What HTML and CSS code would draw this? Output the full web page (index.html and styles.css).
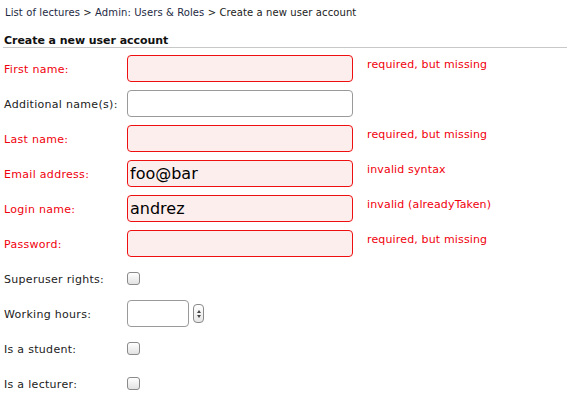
FILE: index.html
```html
<!DOCTYPE html>
<html>
<head>
<meta charset="utf-8">
<link rel="stylesheet" href="styles.css">
</head>
<body>
<div class="page">
  <div class="crumbs"><a>List of lectures</a> &gt; <a>Admin: Users &amp; Roles</a> &gt; <span>Create a new user account</span></div>
  <h2 class="title">Create a new user account</h2>
  <form class="form">
    <label class="lbl err">First name:</label>
    <input class="txt bad" type="text">
    <span class="msg">required, but missing</span>

    <label class="lbl">Additional name(s):</label>
    <input class="txt" type="text">
    <span class="msg"></span>

    <label class="lbl err">Last name:</label>
    <input class="txt bad" type="text">
    <span class="msg">required, but missing</span>

    <label class="lbl err">Email address:</label>
    <input class="txt bad" type="text" value="foo@bar">
    <span class="msg">invalid syntax</span>

    <label class="lbl err">Login name:</label>
    <input class="txt bad" type="text" value="andrez">
    <span class="msg">invalid (alreadyTaken)</span>

    <label class="lbl err">Password:</label>
    <input class="txt bad" type="password">
    <span class="msg">required, but missing</span>

    <label class="lbl">Superuser rights:</label>
    <span class="cell"><input class="chk" type="checkbox"></span>
    <span class="msg"></span>

    <label class="lbl">Working hours:</label>
    <span class="cell numcell"><input class="num" type="text"><span class="spin"><svg width="6" height="12" viewBox="0 0 6 12"><path d="M3 2 L5 5 L1 5 Z" fill="#444"/><path d="M3 10 L5 7 L1 7 Z" fill="#444"/></svg></span></span>
    <span class="msg"></span>

    <label class="lbl">Is a student:</label>
    <span class="cell"><input class="chk" type="checkbox"></span>
    <span class="msg"></span>

    <label class="lbl">Is a lecturer:</label>
    <span class="cell"><input class="chk" type="checkbox"></span>
    <span class="msg"></span>
  </form>
</div>
</body>
</html>
```
FILE: styles.css
```css
html, body {
  margin: 0;
  padding: 0;
  background: #fff;
}
body {
  font-family: "DejaVu Sans", Verdana, sans-serif;
  font-size: 11px;
  line-height: 13px;
  color: #222;
}
.page {
  margin: 0 7px 0 3px;
  padding-top: 6px;
}
.crumbs {
  padding-left: 2px;
  font-size: 10px;
  letter-spacing: 0.1px;
  color: #222;
}
.crumbs a {
  color: #1e2a44;
}
.title {
  margin: 15px 0 0 0;
  padding: 0 0 0 1px;
  font-size: 11px;
  line-height: 13px;
  font-weight: bold;
  letter-spacing: -0.05px;
  color: #111;
  border-bottom: 1px solid #c8c8c8;
}
.form {
  display: grid;
  grid-template-columns: 123px 226px 1fr;
  grid-auto-rows: 35px;
  column-gap: 0;
  align-items: center;
  margin-top: 3px;
  padding-left: 1px;
}
.lbl {
  color: #222;
  padding-top: 1px;
  letter-spacing: 0.3px;
}
.lbl.err {
  color: #f0000c;
}
.txt {
  box-sizing: border-box;
  width: 226px;
  height: 27px;
  margin: 0;
  padding: 0 2px;
  border: 1px solid #9a9a9a;
  border-radius: 4px;
  background: #fff;
  font-family: "DejaVu Sans", sans-serif;
  font-size: 16px;
  color: #000;
  outline: none;
}
.txt.bad {
  border-color: #ee1010;
  background: #fdeeee;
}
.msg {
  align-self: start;
  padding: 7px 0 0 14px;
  letter-spacing: 0.15px;
  color: #f0000c;
}
.cell {
  display: flex;
  align-items: center;
}
.chk {
  appearance: none;
  -webkit-appearance: none;
  box-sizing: border-box;
  width: 13px;
  height: 13px;
  margin: 0;
  border: 1px solid #8a8a8a;
  border-radius: 3px;
  background: linear-gradient(#ffffff, #e2e2e2);
}
.numcell {
  gap: 4px;
}
.num {
  box-sizing: border-box;
  width: 62px;
  height: 27px;
  margin: 0;
  border: 1px solid #9a9a9a;
  border-radius: 4px;
  background: #fff;
  outline: none;
}
.spin {
  box-sizing: border-box;
  width: 11px;
  height: 19px;
  border: 1px solid #8a8a8a;
  border-radius: 4px;
  background: linear-gradient(#fff, #e6e6e6);
  display: flex;
  align-items: center;
  justify-content: center;
}
```
